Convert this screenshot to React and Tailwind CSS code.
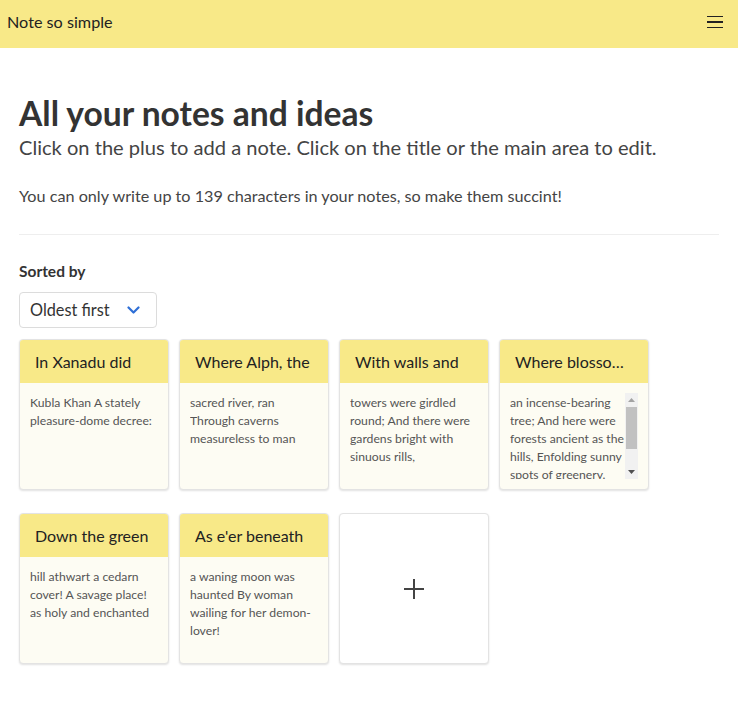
import React from "react";

const notes = [
  { t: "In Xanadu did", b: "Kubla Khan A stately pleasure-dome decree:" },
  { t: "Where Alph, the", b: "sacred river, ran Through caverns measureless to man" },
  { t: "With walls and", b: "towers were girdled round; And there were gardens bright with sinuous rills," },
  { t: "Where blossomed many", b: "an incense-bearing tree; And here were forests ancient as the hills, Enfolding sunny spots of greenery.", scroll: true },
  { t: "Down the green", b: "hill athwart a cedarn cover! A savage place! as holy and enchanted" },
  { t: "As e'er beneath", b: "a waning moon was haunted By woman wailing for her demon-lover!" },
];

function FakeScrollbar() {
  return (
    <div className="w-[13px] shrink-0 bg-[#f1f1f1] flex flex-col items-center">
      <svg width="13" height="14" viewBox="0 0 13 14" className="shrink-0">
        <path d="M3 9 L6.5 5 L10 9 Z" fill="#a3a3a3" />
      </svg>
      <div className="w-[11px] h-[42px] bg-[#c1c1c1]" />
      <div className="flex-1" />
      <svg width="13" height="14" viewBox="0 0 13 14" className="shrink-0">
        <path d="M3 5 L6.5 9 L10 5 Z" fill="#505050" />
      </svg>
    </div>
  );
}

function Card({ t, b, scroll }) {
  return (
    <div className="w-[150px] h-[151px] rounded-[4px] border border-[#e3e3e3] shadow-[0_1px_2px_rgba(0,0,0,0.12)] bg-[#fdfcf3] flex flex-col overflow-hidden">
      <div className="h-[43px] shrink-0 bg-[#f8e988] pl-[15px] pr-[12px] flex items-center">
        <div className="text-[16px] text-[#222] truncate leading-[20px]">{t}</div>
      </div>
      <div className="px-[10px] pt-[10px] pb-[10px] flex-1 min-h-0">
        {scroll ? (
          <div className="h-full flex">
            <div className="flex-1 min-w-0 overflow-hidden text-[12.2px] leading-[18px] text-[#555] pt-[1px]">{b}</div>
            <FakeScrollbar />
          </div>
        ) : (
          <div className="h-full overflow-hidden text-[12.2px] leading-[18px] text-[#555] pt-[1px]">{b}</div>
        )}
      </div>
    </div>
  );
}

export default function App() {
  return (
    <div className="min-h-[701px] bg-white text-[#333]" style={{ fontFamily: "Lato, 'Noto Sans', sans-serif" }}>
      <header className="h-[48px] bg-[#f8e988] flex items-center justify-between pl-[7px] pr-[15px] pb-[4px]">
        <div className="text-[16.2px] text-[#222]">Note so simple</div>
        <div className="flex flex-col gap-[4px] w-[16px]">
          <div className="h-[1.5px] bg-[#222]" />
          <div className="h-[1.5px] bg-[#222]" />
          <div className="h-[1.5px] bg-[#222]" />
        </div>
      </header>
      <main className="px-[19px] pt-[47px]">
        <h1 className="text-[33.6px] font-bold leading-[36px] text-[#333]">All your notes and ideas</h1>
        <p className="text-[20.1px] leading-[28px] mt-[2px] text-[#444]">Click on the plus to add a note. Click on the title or the main area to edit.</p>
        <p className="text-[16.2px] leading-[24px] mt-[23px] text-[#444]">You can only write up to 139 characters in your notes, so make them succint!</p>
        <hr className="mt-[26px] border-t border-[#eeeeee]" />
        <div className="mt-[25px] text-[15.5px] font-bold text-[#333]">Sorted by</div>
        <div className="mt-[9px] w-[138px] h-[36px] border border-[#dcdcdc] rounded-[4px] flex items-center justify-between pl-[10px] pr-[16px]">
          <span className="text-[16.3px] text-[#333]">Oldest first</span>
          <svg width="13" height="9" viewBox="0 0 13 9" fill="none">
            <path d="M1.5 1.5 L6.5 6.5 L11.5 1.5" stroke="#2f6fd6" strokeWidth="2.2" strokeLinecap="round" strokeLinejoin="round" />
          </svg>
        </div>
        <div className="mt-[11px] grid grid-cols-[repeat(4,150px)] gap-x-[10px] gap-y-[23px]">
          {notes.map((n, i) => (
            <Card key={i} {...n} />
          ))}
          <div className="w-[150px] h-[151px] rounded-[4px] border border-[#e3e3e3] shadow-[0_1px_2px_rgba(0,0,0,0.12)] bg-white flex items-center justify-center">
            <svg width="22" height="22" viewBox="0 0 22 22">
              <path d="M11 1 V21 M1 11 H21" stroke="#444" strokeWidth="2" />
            </svg>
          </div>
        </div>
      </main>
    </div>
  );
}
